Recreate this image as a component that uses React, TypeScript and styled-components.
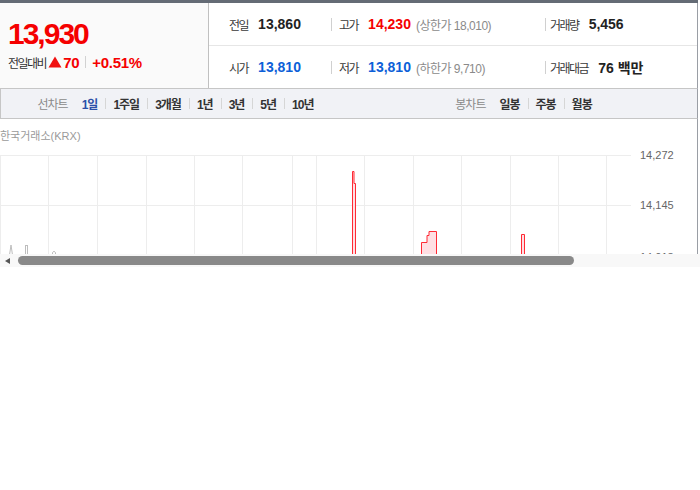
import React from 'react';
import styled, { createGlobalStyle } from 'styled-components';

const GlobalStyle = createGlobalStyle`
  html, body { margin: 0; padding: 0; background: #fff; }
  body {
    font-family: "Liberation Sans", Arial, "Noto Sans CJK KR", sans-serif;
    color: #333;
  }
  * { box-sizing: border-box; }
`;

const RED = '#f50000';
const BLUE = '#0d5fd8';

const Page = styled.div`
  width: 700px;
`;

const TopStrip = styled.div`
  width: 698px;
  height: 3px;
  background: #646b75;
`;

const Summary = styled.div`
  display: flex;
  width: 698px;
  height: 86px;
  border-right: 1px solid #9a9ea5;
  border-bottom: 1px solid #c6c6c6;
`;

const PricePanel = styled.div`
  width: 209px;
  flex: none;
  background: #fafafa;
  border-right: 1px solid #c0c0c0;
  padding: 16px 0 0 8px;
`;

const BigPrice = styled.div`
  font-size: 30px;
  line-height: 30px;
  font-weight: bold;
  letter-spacing: -2px;
  color: ${RED};
`;

const ChangeLine = styled.div`
  display: flex;
  align-items: center;
  height: 18px;
  margin-top: 4px;
`;

const ChangeLabel = styled.span`
  font-size: 12px;
  letter-spacing: -1.5px;
  color: #333;
  margin-right: 2px;
`;

const ChangeValue = styled.span`
  font-size: 15px;
  font-weight: bold;
  color: ${RED};
  letter-spacing: -0.3px;
`;

const VDivider = styled.span<{ $h?: number; $gap?: number }>`
  display: inline-block;
  width: 1px;
  height: ${(p) => p.$h ?? 12}px;
  background: #d2d2d2;
  margin: 0 ${(p) => p.$gap ?? 6}px;
`;

const InfoTable = styled.div`
  flex: 1;
  display: flex;
  flex-direction: column;
`;

const InfoRow = styled.div<{ $last?: boolean }>`
  display: grid;
  grid-template-columns: 122px 214px 1fr;
  align-items: center;
  height: ${(p) => (p.$last ? 43 : 42)}px;
  border-top: ${(p) => (p.$last ? '1px solid #e6e6e6' : 'none')};
`;

const Cell = styled.div<{ $sep?: boolean; $gap?: number }>`
  display: flex;
  align-items: center;
  white-space: nowrap;
  padding-left: ${(p) => (p.$sep ? 0 : 20)}px;
  &::before {
    content: '';
    display: ${(p) => (p.$sep ? 'block' : 'none')};
    width: 1px;
    height: 13px;
    background: #d0d0d0;
    margin-right: ${(p) => p.$gap ?? 7}px;
  }
`;

const Label = styled.span`
  font-size: 12px;
  letter-spacing: -1.5px;
  color: #3a3a3a;
  margin-right: 10px;
`;

const Value = styled.span<{ $color?: string }>`
  font-size: 14px;
  font-weight: bold;
  color: ${(p) => p.$color ?? '#222'};
`;

const Note = styled.span`
  font-size: 12px;
  color: #8a8a8a;
  margin-left: 5px;
  letter-spacing: -0.5px;
`;

const TabBar = styled.div`
  display: grid;
  grid-template-columns: 349px 1fr;
  width: 698px;
  height: 30px;
  background: #f1f2f6;
  border-left: 1px solid #c6c6c6;
  border-right: 1px solid #9a9ea5;
  border-bottom: 1px solid #c6c6c6;
`;

const TabGroup = styled.div`
  display: flex;
  align-items: center;
  justify-content: center;
`;

const TabTitle = styled.span`
  font-size: 12px;
  letter-spacing: -1px;
  color: #8a8a8a;
  margin-right: 14px;
`;

const TabItem = styled.span<{ $active?: boolean; $first?: boolean }>`
  display: flex;
  align-items: center;
  font-size: 12px;
  font-weight: bold;
  letter-spacing: -1px;
  color: ${(p) => (p.$active ? '#2a4fa8' : '#333')};
  &::before {
    content: '';
    display: ${(p) => (p.$first ? 'none' : 'block')};
    width: 1px;
    height: 11px;
    background: #d6d6d6;
    margin: 0 7px 0 8px;
  }
`;

const ChartFrame = styled.div`
  width: 698px;
  height: 135px;
  overflow: hidden;
  border-right: 1px solid #9a9ea5;
`;

const Caption = styled.div`
  height: 28px;
  padding-top: 10px;
  font-size: 11px;
  line-height: 15px;
  color: #9a9a9a;
`;

const ScrollTrack = styled.div`
  display: flex;
  align-items: center;
  width: 700px;
  height: 13px;
  background: #f8f8f8;
  padding-left: 5px;
`;

const ScrollArrow = styled.span`
  width: 0;
  height: 0;
  border-top: 3.5px solid transparent;
  border-bottom: 3.5px solid transparent;
  border-right: 5px solid #555;
`;

const ScrollThumb = styled.span`
  margin-left: 8px;
  width: 556px;
  height: 9px;
  border-radius: 5px;
  background: #898989;
`;

const vLines = [0, 48, 97, 146, 194, 242, 292, 316, 364, 413, 461, 510, 558, 606];

const UpTriangle = () => (
  <svg width="14" height="12" viewBox="0 0 14 12" style={{ marginRight: 1 }}>
    <polygon points="7,0.5 13.5,11.5 0.5,11.5" fill="#f01010" />
  </svg>
);

const Chart = () => (
  <svg width="697" height="107" viewBox="0 0 697 107" style={{ display: 'block' }}>
    {vLines.map((x) => (
      <line key={x} x1={x + 0.5} y1={8} x2={x + 0.5} y2={107} stroke="#ededed" strokeWidth={1} />
    ))}
    <line x1={0} y1={8.5} x2={631} y2={8.5} stroke="#ededed" />
    <line x1={0} y1={58.5} x2={631} y2={58.5} stroke="#ededed" />
    <g fontFamily='"Liberation Sans", Arial, sans-serif' fontSize="11" fill="#666">
      <text x={640} y={12}>14,272</text>
      <text x={640} y={62}>14,145</text>
      <text x={640} y={114}>14,018</text>
    </g>
    <g stroke="#bdbdbd" strokeWidth={1} fill="none">
      <path d="M9.5,108 L11,98 L12.5,108" />
      <rect x={25.5} y={98.5} width={2} height={10} />
      <path d="M52.5,108 V105.5 Q54,103 55.5,105.5 V108" />
    </g>
    <g stroke="#ff2a35" strokeWidth={1} fill="#ffdfe3">
      <path d="M352.5,108 V24.5 H354 V36.5 H355.5 V108" />
      <path d="M421.5,108 V95.5 H427 V88.5 H429 V84.5 H436.5 V108" />
      <path d="M521.5,108 V87.5 H524.5 V108" />
    </g>
  </svg>
);

const lineTabs = ['1일', '1주일', '3개월', '1년', '3년', '5년', '10년'];
const candleTabs = ['일봉', '주봉', '월봉'];

export default function App() {
  return (
    <Page>
      <GlobalStyle />
      <TopStrip />
      <Summary>
        <PricePanel>
          <BigPrice>13,930</BigPrice>
          <ChangeLine>
            <ChangeLabel>전일대비</ChangeLabel>
            <UpTriangle />
            <ChangeValue>70</ChangeValue>
            <VDivider />
            <ChangeValue>+0.51%</ChangeValue>
          </ChangeLine>
        </PricePanel>
        <InfoTable>
          <InfoRow>
            <Cell>
              <Label>전일</Label>
              <Value>13,860</Value>
            </Cell>
            <Cell $sep $gap={7}>
              <Label>고가</Label>
              <Value $color={RED}>14,230</Value>
              <Note>(상한가 18,010)</Note>
            </Cell>
            <Cell $sep $gap={4}>
              <Label>거래량</Label>
              <Value>5,456</Value>
            </Cell>
          </InfoRow>
          <InfoRow $last>
            <Cell>
              <Label>시가</Label>
              <Value $color={BLUE}>13,810</Value>
            </Cell>
            <Cell $sep $gap={7}>
              <Label>저가</Label>
              <Value $color={BLUE}>13,810</Value>
              <Note>(하한가 9,710)</Note>
            </Cell>
            <Cell $sep $gap={4}>
              <Label>거래대금</Label>
              <Value>76 백만</Value>
            </Cell>
          </InfoRow>
        </InfoTable>
      </Summary>
      <TabBar>
        <TabGroup>
          <TabTitle>선차트</TabTitle>
          {lineTabs.map((t, i) => (
            <TabItem key={t} $first={i === 0} $active={i === 0}>
              {t}
            </TabItem>
          ))}
        </TabGroup>
        <TabGroup>
          <TabTitle>봉차트</TabTitle>
          {candleTabs.map((t, i) => (
            <TabItem key={t} $first={i === 0}>
              {t}
            </TabItem>
          ))}
        </TabGroup>
      </TabBar>
      <ChartFrame>
        <Caption>한국거래소(KRX)</Caption>
        <Chart />
      </ChartFrame>
      <ScrollTrack>
        <ScrollArrow />
        <ScrollThumb />
      </ScrollTrack>
    </Page>
  );
}
